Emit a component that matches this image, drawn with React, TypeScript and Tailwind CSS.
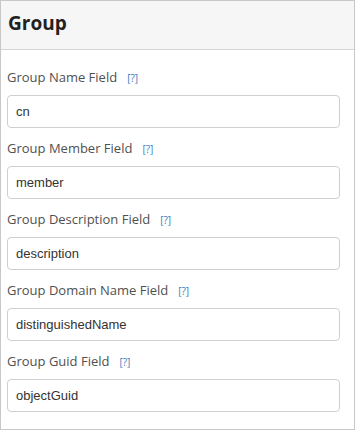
const fields = [
  { label: "Group Name Field", value: "cn" },
  { label: "Group Member Field", value: "member" },
  { label: "Group Description Field", value: "description" },
  { label: "Group Domain Name Field", value: "distinguishedName" },
  { label: "Group Guid Field", value: "objectGuid" },
];

export default function App() {
  return (
    <div className="w-[355px] h-[430px] bg-white border border-[#c8c8c8] overflow-hidden">
      <div className="h-[49px] bg-[#f6f6f6] border-b border-[#d6d6d6] px-[7px] pt-[10px]">
        <h2 className="text-[19px] font-bold text-[#222] font-['Open_Sans',sans-serif] leading-[24px]">
          Group
        </h2>
      </div>
      <div className="px-[6px] pt-[17px]">
        {fields.map((f) => (
          <div key={f.label} className="mb-[10px]">
            <div className="flex items-center h-[20px] pt-[2px] mb-[8px] font-['Open_Sans',sans-serif]">
              <span className="text-[13px] text-[#505050]">{f.label}</span>
              <span className="ml-[10px] text-[10px] text-[#3a7cc0]">[?]</span>
            </div>
            <input
              type="text"
              defaultValue={f.value}
              className="w-[333px] h-[33px] rounded-[4px] border border-[#cfcfcf] px-[8px] text-[13px] text-[#333] font-['Liberation_Sans',Arial,sans-serif] outline-none"
            />
          </div>
        ))}
      </div>
    </div>
  );
}
